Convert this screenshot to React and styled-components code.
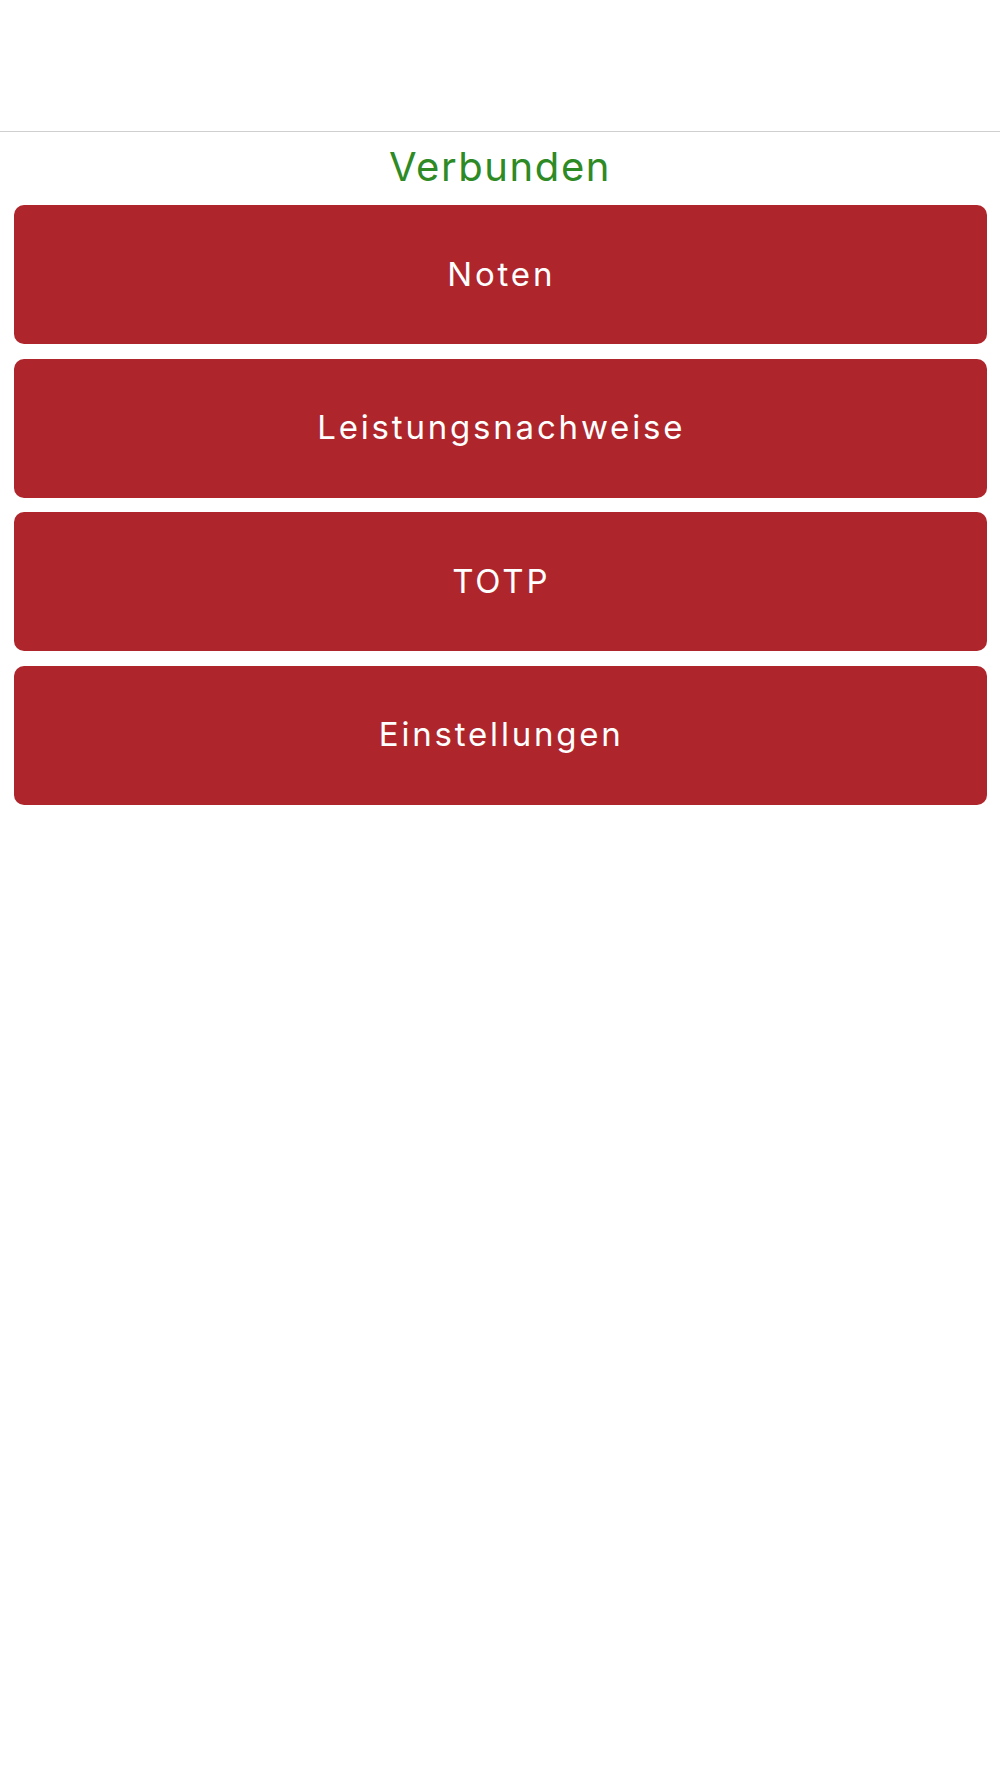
import React from "react";
import styled, { createGlobalStyle } from "styled-components";

const Global = createGlobalStyle`
  html, body { margin: 0; padding: 0; background: #ffffff; }
  body { font-family: Inter, "Liberation Sans", Arial, sans-serif; }
  * { box-sizing: border-box; }
`;

const Page = styled.div`
  min-height: 1778px;
  background: #ffffff;
  display: flex;
  flex-direction: column;
`;

const TopBar = styled.header`
  height: 132px;
  border-bottom: 1px solid #cfcfcf;
  background: #ffffff;
`;

const Status = styled.div`
  height: 73px;
  display: flex;
  align-items: center;
  justify-content: center;
  color: ${(p) => (p.$connected ? "#2e8a25" : "#b0262c")};
  font-family: Inter, "Liberation Sans", Arial, sans-serif;
  font-size: 40px;
  letter-spacing: 1.6px;
  padding-bottom: 5px;
`;

const Menu = styled.nav`
  display: flex;
  flex-direction: column;
  gap: 14.5px;
  padding: 0 13px 0 13.5px;
`;

const MenuButton = styled.button`
  height: 139px;
  width: 100%;
  border: none;
  border-radius: 10px;
  background: #ae262c;
  color: #ffffff;
  font-family: Inter, "Liberation Sans", Arial, sans-serif;
  font-size: 33px;
  font-weight: 400;
  letter-spacing: 2.8px;
  display: flex;
  align-items: center;
  justify-content: center;
  cursor: pointer;
  padding: 0 0 2px 2px;
`;

const items = ["Noten", "Leistungsnachweise", "TOTP", "Einstellungen"];

export default function App() {
  return (
    <>
      <Global />
      <Page>
        <TopBar />
        <Status $connected>Verbunden</Status>
        <Menu>
          {items.map((t) => (
            <MenuButton key={t}>{t}</MenuButton>
          ))}
        </Menu>
      </Page>
    </>
  );
}
